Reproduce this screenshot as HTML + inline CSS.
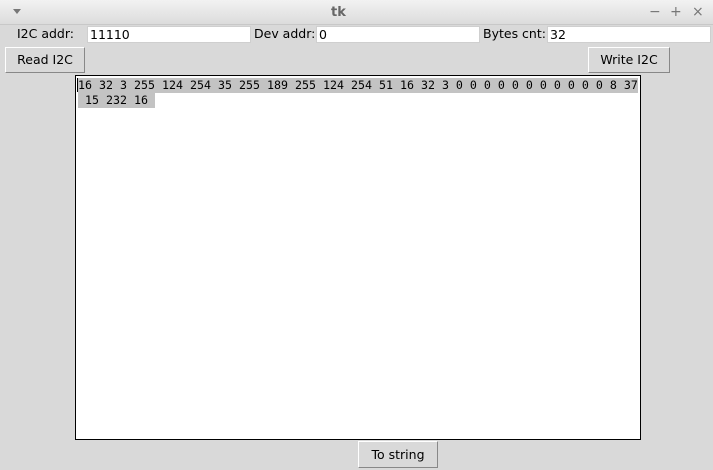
<!DOCTYPE html>
<html><head><style>
body{margin:0;width:713px;height:470px;background:#d9d9d9;position:relative;overflow:hidden;font-family:"DejaVu Sans","Liberation Sans",sans-serif;font-size:12.5px;color:#000}
.a{position:absolute;white-space:nowrap}
.tb{left:0;top:0;width:713px;height:24px;background:linear-gradient(#f2f2f2,#dcdcdc);border-bottom:1px solid #c8c8c8}
.ent{background:#fff;border:1px solid #cfcfcf;height:17px;line-height:16px;padding-left:2px;box-sizing:border-box}
.btn{background:#d9d9d9;border:1px solid #fff;border-right-color:#888;border-bottom-color:#888;box-sizing:border-box;text-align:center}
.mono{font-family:"DejaVu Sans Mono",monospace;font-size:11.63px;line-height:15px}
.sel{background:#c3c3c3}
.ctl{color:#777;font-size:14px;top:4px}
</style></head><body>
<div class="a tb"></div>
<div class="a" style="left:13px;top:9px;width:0;height:0;border-left:4px solid transparent;border-right:4px solid transparent;border-top:5px solid #777"></div>
<div class="a" style="left:331px;top:5px;font-weight:bold;color:#666;font-size:13px">tk</div>
<div class="a ctl" style="left:649px">−</div>
<div class="a ctl" style="left:670px">+</div>
<div class="a ctl" style="left:692px">×</div>
<div class="a" style="left:17px;top:26px">I2C addr:</div>
<div class="a ent" style="left:87px;top:26px;width:164px">11110</div>
<div class="a" style="left:254px;top:26px">Dev addr:</div>
<div class="a ent" style="left:316px;top:26px;width:164px">0</div>
<div class="a" style="left:483px;top:26px">Bytes cnt:</div>
<div class="a ent" style="left:547px;top:26px;width:164px">32</div>
<div class="a btn" style="left:5px;top:47px;width:80px;height:26px;line-height:24px">Read I2C</div>
<div class="a btn" style="left:588px;top:47px;width:82px;height:26px;line-height:24px">Write I2C</div>
<div class="a" style="left:75px;top:75px;width:566px;height:365px;background:#fff;border:1px solid #000;box-sizing:border-box"></div>
<div class="a mono sel" style="left:78px;top:78px;width:560px;height:15px;white-space:pre">16 32 3 255 124 254 35 255 189 255 124 254 51 16 32 3 0 0 0 0 0 0 0 0 0 0 0 8 37</div>
<div class="a mono sel" style="left:78px;top:93px;width:77px;height:15px;white-space:pre"> 15 232 16</div>
<div class="a" style="left:77px;top:78px;width:1px;height:14px;background:#000"></div>
<div class="a btn" style="left:358px;top:441px;width:80px;height:27px;line-height:25px">To string</div>
</body></html>
